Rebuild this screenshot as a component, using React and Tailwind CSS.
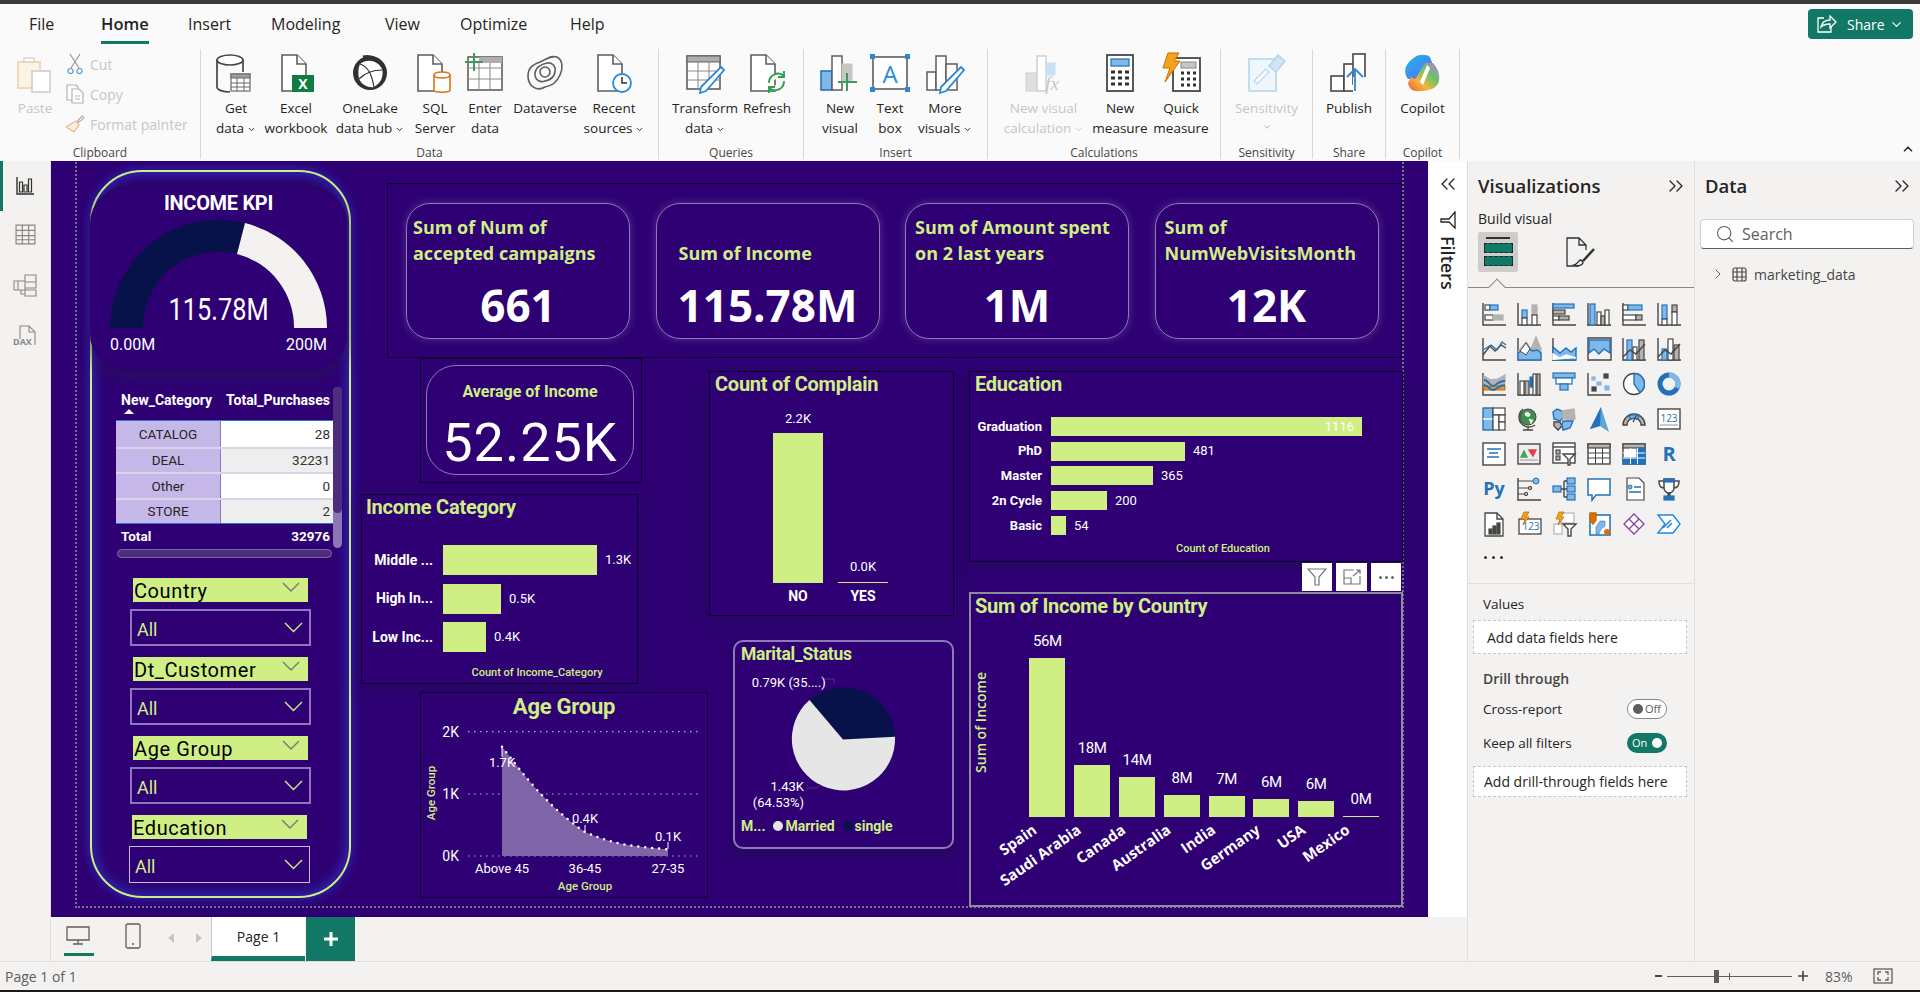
import { ChevronDown, ChevronRight, ChevronUp, ChevronsLeft, ChevronsRight, Search } from "lucide-react";

const LIME = "#cfef85";
const D = "#484644";
const B = "#2372b9";
const L = "#80b8ea";
const G = "#b5b3b1";
const NAVY = "#07124a";

const r = (x, y, w, h, fill = "#fff", stroke = D, sw = 1.2) => (
  <rect x={x} y={y} width={w} height={h} fill={fill} stroke={stroke} strokeWidth={sw} />
);
const p = (d, stroke = D, fill = "none", sw = 1.4) => (
  <path d={d} stroke={stroke} fill={fill} strokeWidth={sw} />
);
const ax = p("M1 1v22h23");

// 24x24 gallery, row by row like the pane
const VIZ = [
  <>{ax}{r(3, 3, 5, 5)}{r(8, 3, 8, 5, L, B)}{r(3, 13, 8, 5)}{r(11, 13, 10, 5, G, G)}</>,
  <>{ax}{r(5, 8, 5, 8, L, B)}{r(5, 16, 5, 7)}{r(15, 3, 5, 10, G, G)}{r(15, 13, 5, 10)}</>,
  <>{ax}{r(1, 2, 21, 4, L, B)}{r(1, 8, 12, 4, G, D)}{r(1, 14, 6, 4)}{r(7, 14, 10, 4, G, D)}</>,
  <>{p("M1 1v22M0 23h24")}{r(3, 2, 5, 21, L, B)}{r(10, 10, 4, 13)}{r(14, 14, 4, 9, G, D)}{r(18, 8, 4, 15)}</>,
  <>{ax}{r(1, 3, 5, 5)}{r(6, 3, 14, 5, L, B)}{r(1, 13, 13, 5)}{r(14, 13, 6, 5, G, D)}</>,
  <>{ax}{r(5, 3, 5, 14, L, B)}{r(5, 17, 5, 6)}{r(15, 3, 5, 7, G, D)}{r(15, 10, 5, 13)}</>,
  <>{ax}{p("M1 18l7-9 5 5 6-6 5 3", D)}{p("M1 13l8-5 6 5 5-8 4 3", B)}</>,
  <>{ax}{p("M1 23v-8l8-10 5 7 5-12 5 12v11z", G, G)}{p("M1 23v-7l9-5 6 3 4-1 4 3v7z", B, L)}{p("M3 14l6-8 4 6-4 6z", D, "#fff", 1)}</>,
  <>{ax}{p("M1 10l7 6 6-5 5 4 5-4v12H1z", B, L)}{p("M1 23v-6l7 4 6-3 10 3", "#fff", "#fff")}</>,
  <>{p("M1 1h23v22H1z")}{p("M2 3h21v13l-6-4-5 5-5-5-5 4z", B, L)}</>,
  <>{ax}{r(5, 3, 5, 20, L, B)}{r(11, 10, 4, 13)}{r(17, 3, 5, 20, G, D)}{p("M1 20l7-7 6 4 9-10", D)}</>,
  <>{ax}{r(5, 12, 5, 11, L, B)}{r(11, 2, 5, 21)}{r(17, 8, 5, 15, G, D)}{p("M1 20l7-7 6 4 9-10", D)}</>,
  <>{ax}{p("M2 4l7 4 7-1 7-4v8l-7 3-7-1-7-2z", G, G)}{r(2, 14, 21, 4, "#e8912d", "#c96a00", 1)}{p("M2 8c5 0 5 6 9 6s5-6 12-5", B, "none", 2)}{p("M2 13c5 0 5 5 9 5s5-5 12-5", B, "none", 2)}</>,
  <>{ax}{r(3, 9, 4, 14)}{r(8, 9, 4, 14, G, D)}{r(13, 5, 3, 10, B, B)}{r(16, 2, 3, 21)}{r(20, 2, 3, 21, G, D)}</>,
  <>{r(1, 1, 22, 5, L, B)}{r(4, 6, 16, 6, "#fff", B)}{r(8, 12, 8, 6, L, B)}</>,
  <>{ax}{r(5, 5, 3, 3, L, L)}{r(10, 10, 4, 3, L, L)}{r(17, 2, 4, 4, D, D)}{r(5, 15, 4, 4, D, D)}{r(18, 14, 4, 4, L, L)}</>,
  <><circle cx="12" cy="12" r="10.5" fill="#fff" stroke={D} strokeWidth="1.3" />{p("M12 1.5a10.5 10.5 0 0 1 6 19L12 12z", B, L)}</>,
  <><circle cx="12" cy="12" r="9" fill="none" stroke={B} strokeWidth="5" /><path d="M12 3a9 9 0 0 1 8 13" fill="none" stroke={L} strokeWidth="5" /></>,
  <>{r(1, 1, 10, 22, L, B, 1.4)}{p("M1 12h10", "#fff")}{r(11, 1, 12, 7, "#fff", D)}{r(11, 8, 6, 15, "#fff", D)}{r(17, 8, 6, 7, "#fff", D)}{r(17, 15, 6, 8, "#fff", D)}</>,
  <><circle cx="11" cy="10" r="8" fill="#3f8f4f" stroke={D} />{p("M8 6c3-2 5 0 5 2s-3 2-5 0zM12 12l4 1-2 4z", "#fff", "#fff", 0.5)}{p("M6 2a10 10 0 0 0 12 16M11 20v3M6 23h10", D)}</>,
  <>{p("M1 5l4-3 5 2 1 7-3 3-6-2z", B, L)}{p("M10 4l12-2 1 10-7 1-5-2z", G, G)}{p("M2 15l6 0 2 4-4 4-4-4z", D, G)}{p("M11 14h10l-3 7-7 2-1-5z", B, L)}</>,
  <>{p("M14 0L22 25 13 19 3 22z", "#5aa9d6", "#5aa9d6", 0)}{p("M14 0l-1 19-10 3z", B, B, 0)}</>,
  <>{p("M1 18a11 11 0 0 1 22 0h-4a7 7 0 0 0-14 0z", D, G)}{p("M7 9a11 11 0 0 1 10 0l-2 3a7 7 0 0 0-6 0z", B, L)}{p("M14 9l-3 6", D)}</>,
  <>{r(1, 2, 22, 20, "#fff", D, 1.4)}<text x="12" y="15" fontSize="10" textAnchor="middle" fill={B}>123</text>{p("M3 18h18", G)}</>,
  <>{r(1, 1, 22, 22, "#fff", D, 1.4)}{p("M5 7h14M7 11h9M5 15h12", B, "none", 1.6)}</>,
  <>{r(1, 2, 22, 20, "#eee", D, 1.4)}{p("M4 15l3-6 3 6z", "#45a35b", "#45a35b")}{p("M12 8h7l-3 6z", "#e2434b", "#e2434b")}{p("M3 18h18", G)}</>,
  <>{r(1, 1, 22, 20, "#fff", D, 1.4)}{p("M1 5h22")}{r(4, 8, 4, 4, G, D)}{r(4, 14, 4, 4, G, D)}{p("M11 12h12l-5 5v6h-2v-6z", D, "#fff")}</>,
  <>{r(1, 2, 22, 20, "#fff", D, 1.4)}{r(1, 2, 22, 4, G, D)}{p("M8.5 6v16M15.5 6v16M1 11h22M1 16h22", D, "none", 1)}</>,
  <>{r(1, 2, 22, 20, "#fff", D, 1.4)}{r(1, 2, 22, 4, G, D)}{r(15, 6, 8, 16, B, B)}{r(1, 16, 22, 6, B, B)}{p("M8.5 6v16M15.5 6v16M1 11h22M1 16h22", "#fff", "none", 1)}</>,
  <text x="12" y="19" fontSize="20" fontWeight="700" textAnchor="middle" fill={B}>R</text>,
  <text x="12" y="18" fontSize="18" fontWeight="700" textAnchor="middle" fill={B}>Py</text>,
  <>{ax}{p("M1 4h16M1 11h11M1 17h7", D, "none", 1)}<circle cx="19" cy="4" r="3" fill={L} stroke={B} /><circle cx="13" cy="11" r="1.7" fill={G} stroke={D} /><circle cx="9" cy="17" r="1.7" fill={G} stroke={D} /></>,
  <>{r(1, 9, 8, 6, L, B)}{r(15, 1, 8, 6, L, B)}{r(15, 9, 8, 6, L, B)}{r(15, 17, 8, 6, L, B)}{p("M9 12h6M12 4v16M12 4h3M12 20h3", D)}</>,
  <>{p("M1 2h22v16H9l-4 5v-5H1z", B, "#fff", 1.5)}</>,
  <>{p("M5 1h12l5 5v17H5z", D, "#fff", 1.2)}<circle cx="8" cy="10" r="2" fill={L} stroke={B} />{p("M12 10h7M7 15h12", B)}</>,
  <>{p("M7 2h10v9a5 5 0 0 1-10 0zM7 4H2c0 5 2 7 5 7M17 4h5c0 5-2 7-5 7", D, "#fff", 1.5)}{r(7, 2, 10, 3, B, B)}{r(11, 16, 2, 3, D, D)}{r(7, 19, 10, 4, B, B)}</>,
  <>{p("M3 1h12l6 6v17H3z", D, "#fff", 1.3)}{p("M15 1v6h6")}{r(7, 17, 3, 5, D, D)}{r(11, 14, 3, 8, D, D)}{r(15, 11, 3, 11, D, D)}</>,
  <>{r(2, 7, 22, 15, "#fff", D, 1.3)}<text x="14" y="18" fontSize="10" textAnchor="middle" fill={B}>123</text>{p("M7 0h5l-3 5h3l-6 8 2-6H4z", "#c96a00", "#f2a51c", 0.8)}</>,
  <>{r(9, 1, 13, 10, "#fff", G)}{r(2, 12, 8, 10, "#fff", G)}{p("M7 0h5l-3 5h3l-6 8 2-6H4z", "#c96a00", "#f2a51c", 0.8)}{p("M11 12h13l-5 5v7h-3v-7z", D, "#fff")}</>,
  <>{p("M3 3h20v20H3z", "#1a6eb0", "#fff", 1.5)}{p("M9 15l4-6h5v5l-4 3-2 5H9z", "#1a6eb0", L, 0.5)}{p("M3 1h6v7l-3 4-3-4z", "#c96a00", "#dd6b10")}<circle cx="20" cy="20" r="3" fill="#dd6b10" /></>,
  <>{p("M12 2l5 5-5 5-5-5zM17 7l5 5-5 5-5-5zM7 7l5 5-5 5-5-5zM12 12l5 5-5 5-5-5z", "#8a3ea6", "#fff", 1.3)}</>,
  <>{p("M1 3h15l7 9-7 9H1l7-9z", "#1e88e5", "#fff", 1.4)}{p("M6 16l8-8", "#1e88e5", "none", 1.6)}{p("M10 16l5-5", "#1e88e5", "none", 1.6)}</>,
];

function VizIcon({ children }) {
  return (
    <svg width="24" height="24" viewBox="0 0 24 24" className="overflow-visible">
      {children}
    </svg>
  );
}

// ribbon icons, all on a 40 box
const doc = <>{p("M6 2h15l9 9v27H6z", "#605e5c", "#fff", 1.6)}{p("M21 2v9h9", "#605e5c", "#fff", 1.6)}</>;
const RIBBON = {
  paste: <>{p("M3 9h22v26H3z", "#f0d9b5", "#fbf3e4", 2)}{p("M9 9V5h10v4z", "#d8d5d2", "#fff", 1.5)}{r(17, 18, 18, 21, "#fff", "#cfcdcb", 1.6)}</>,
  getdata: <><ellipse cx="14" cy="7" rx="13" ry="5" fill="#fff" stroke="#484644" strokeWidth="1.7" />{p("M1 7v27c0 3 6 5 13 5", D, "none", 1.7)}{p("M27 7v12", D, "none", 1.7)}{r(15, 21, 19, 17, "#fff", "#6b6967", 1.2)}{r(15, 21, 19, 4, "#a19f9d", "#6b6967", 1)}{p("M21 25v13M28 25v13M15 30h19M15 34h19", "#6b6967", "none", 1)}</>,
  excel: <>{doc}{r(16, 22, 22, 17, "#107c41", "#107c41", 0)}<text x="27" y="36" fontSize="14" fontWeight="700" textAnchor="middle" fill="#fff">X</text></>,
  onelake: <><circle cx="20" cy="20" r="17" fill="#323130" /><path d="M10 11c8-6 18-3 22 5 2 7-1 14-8 18-6 1-12-2-15-8-1-5-1-11 1-15z" fill="#fff" /><path d="M10 11c9 3 12 12 14 23M32 17c-8 0-17 3-23 9" fill="none" stroke="#323130" strokeWidth="1.2" /><path d="M13 4c8-2 16 2 19 9" fill="none" stroke="#323130" strokeWidth="3" /></>,
  sql: <>{p("M3 2h15l9 9v27H3z", "#605e5c", "#fff", 1.6)}{p("M18 2v9h9", "#605e5c", "#fff", 1.6)}<path d="M19 22c0-4 16-4 16 0v15c0 3-16 3-16 0z" fill="#fff" stroke="#d9731a" strokeWidth="1.6" /><path d="M19 22c0 4 16 4 16 0" fill="none" stroke="#d9731a" strokeWidth="1.6" /></>,
  enter: <>{r(3, 4, 34, 33, "#fff", "#605e5c", 1.6)}{r(14, 4, 23, 6, "#b0aeac", "#b0aeac", 0)}{p("M14 10v27M25 10v27M3 15h34M3 26h34", "#8a8886", "none", 1)}{p("M9 0v18M0 9h18", "#3f9a5a", "none", 2)}</>,
  dataverse: <>{p("M20 34c-8 5-17-1-17-11 0-9 6-12 12-14C22 6 26 2 32 4c6 3 6 12 3 18-3 7-9 11-15 12z", "#605e5c", "none", 1.6)}{p("M20 28c-5 2-10-1-10-7s6-10 12-11 9 4 8 9c-1 6-5 8-10 9z", "#605e5c", "none", 1.6)}<circle cx="20" cy="19" r="5" fill="none" stroke="#605e5c" strokeWidth="1.6" /></>,
  recent: <>{p("M4 2h15l9 9v27H4z", "#605e5c", "#fff", 1.6)}{p("M19 2v9h9", "#605e5c", "#fff", 1.6)}<circle cx="28" cy="30" r="9" fill="#fff" stroke="#2b88d8" strokeWidth="1.8" />{p("M28 24v6h5", "#323130", "none", 1.5)}</>,
  transform: <>{r(2, 3, 33, 33, "#fff", "#605e5c", 1.6)}{r(2, 3, 33, 6, "#b0aeac", "#605e5c", 1)}{p("M13 9v27M24 9v27M2 18h33M2 27h33", "#8a8886", "none", 1)}{p("M36 14l3 3-18 21-6 2 1-6z", "#2b88d8", "#fff", 1.8)}</>,
  refresh: <>{p("M4 2h15l9 9v27H4z", "#605e5c", "#fff", 1.6)}{p("M19 2v9h9", "#605e5c", "#fff", 1.6)}<path d="M22 29a9 9 0 0 1 15-6M37 29a9 9 0 0 1-15 6" fill="#fafafa" stroke="#2e9e4f" strokeWidth="2" strokeLinecap="round" />{p("M37 18v6h-6M22 40v-6h6", "#2e9e4f", "none", 1.8)}</>,
  newvisual: <>{r(1, 18, 11, 19, L, "#1a6eb0", 1.5)}{r(12, 3, 10, 34, "#fff", "#605e5c", 1.5)}{r(22, 11, 10, 18, "#c8c6c4", "#c8c6c4", 1)}{p("M27 20v18M18 29h19", "#3f9a5a", "none", 2)}</>,
  textbox: <>{r(3, 4, 34, 32, "#fff", "#605e5c", 1.6)}<text x="20" y="30" fontSize="24" textAnchor="middle" fill="#2b88d8">A</text>{r(0, 1, 5, 5, "#2b88d8", "#2b88d8", 0)}{r(35, 1, 5, 5, "#2b88d8", "#2b88d8", 0)}{r(0, 34, 5, 5, "#2b88d8", "#2b88d8", 0)}{r(35, 34, 5, 5, "#2b88d8", "#2b88d8", 0)}</>,
  morevisuals: <>{r(2, 19, 9, 18, "#fff", "#605e5c", 1.5)}{r(11, 3, 10, 34, "#fff", "#605e5c", 1.5)}{r(21, 11, 11, 26, "#fff", "#605e5c", 1.5)}{p("M36 14l3 3-18 21-6 2 1-6z", "#2b88d8", "#fff", 1.8)}</>,
  fx: <>{r(2, 20, 11, 18, "#e1dfdd", "#d2d0ce", 1)}{r(13, 3, 9, 35, "#fff", "#d2d0ce", 1.5)}{r(22, 10, 9, 12, "#c7e0f4", "#c7e0f4", 1)}<text x="28" y="37" fontSize="19" fontStyle="italic" fontFamily="Liberation Serif" textAnchor="middle" fill="#c8c6c4">fx</text></>,
  calc: <>{r(7, 2, 26, 36, "#fff", "#484644", 1.8)}{r(11, 6, 18, 7, L, "#1a6eb0", 1.2)}{p("M11 19h4M18 19h4M25 19h4M11 25h4M18 25h4M25 25h4M11 31h4M18 31h4M25 31h4", "#323130", "none", 3)}</>,
  quick: <>{r(12, 5, 27, 33, "#fff", "#484644", 1.8)}{r(20, 9, 15, 6, "#c8c6c4", "#8a8886", 1)}{p("M20 20h3M26 20h3M32 20h3M20 26h3M26 26h3M32 26h3M20 32h3M26 32h3M32 32h3", "#323130", "none", 3)}{p("M7 0h11l-5 8h6L4 29l5-14H2z", "#c96a00", "#f2a51c", 1)}</>,
  sens: <>{r(2, 6, 27, 32, "#eff6fc", "#b3d6ee", 1.6)}{p("M7 28l12-12 3 3-12 12z", "#b3d6ee", "#fff", 1.2)}{p("M22 13l9-11 7 6-9 11z", "#b3d6ee", "#cfe4f4", 1.5)}</>,
  publish: <>{r(2, 23, 13, 15, "#fff", D, 1.6)}{r(15, 11, 13, 27, "#fff", D, 1.6)}{r(24, 1, 12, 30, "#fff", D, 1.6)}{r(24, 24, 14, 15, "#fafafa", "#fafafa", 0)}{p("M26 38V16M18 24l8-8 8 8", "#2b88d8", "none", 1.8)}</>,
  copilot: <>
    <defs>
      <linearGradient id="cpa" x1="0" y1="0" x2="1" y2="1"><stop offset="0" stopColor="#1fb6e9" /><stop offset=".55" stopColor="#3f8df0" /><stop offset="1" stopColor="#8a5cf0" /></linearGradient>
      <linearGradient id="cpb" x1="0" y1="1" x2="1" y2="0"><stop offset="0" stopColor="#f05a3a" /><stop offset=".35" stopColor="#f4b83a" /><stop offset=".65" stopColor="#66c36a" /><stop offset="1" stopColor="#d070e0" /></linearGradient>
    </defs>
    <path d="M12 4c4-3 12-3 15 0l5 14-12-4-7 12H5C1 20 0 12 12 4z" fill="url(#cpa)" />
    <path d="M13 38c-4 0-7-3-8-8l3-6c4 3 5 2 7-2l7-12h8c5 5 9 16 4 22-3 4-8 6-21 6z" fill="url(#cpb)" />
    <path d="M24 12l3 3-7 17-3-3z" fill="#fff" />
  </>,
};

function RibbonIcon({ name, size = "w-[40px] h-[40px]" }) {
  return (
    <svg viewBox="0 0 40 40" className={`${size} overflow-visible`}>
      {RIBBON[name]}
    </svg>
  );
}

function Big({ icon, lines, w, caret, off }) {
  return (
    <div className={`flex flex-col items-center shrink-0 ${w} ${off ? "text-[#c8c6c4]" : "text-[#252423]"}`}>
      <div className="h-[44px] flex items-end">
        <RibbonIcon name={icon} />
      </div>
      <div className="mt-[5px] text-[13.5px] leading-[20px] text-center whitespace-nowrap">
        {lines.map((l, i) => (
          <div key={l} className="flex items-center justify-center">
            {l}
            {caret && i === lines.length - 1 && <ChevronDown size={9} strokeWidth={2.5} className="ml-[3px] mt-[2px]" />}
          </div>
        ))}
      </div>
    </div>
  );
}

function Group({ w, label, pad = "", children }) {
  return (
    <div className={`${w} shrink-0 h-[110px] flex flex-col border-r border-[#d9d7d5]`}>
      <div className={`flex-1 flex ${pad}`}>{children}</div>
      <div className="relative top-[2px] text-center text-[12px] leading-[16px] text-[#484644]">{label}</div>
    </div>
  );
}

function SmallAction({ icon, text }) {
  return (
    <div className="flex items-center h-[30px] text-[#c8c6c4] text-[14px]">
      <span className="w-[20px] flex justify-center">{icon}</span>
      <span className="ml-[5px]">{text}</span>
    </div>
  );
}

function Ribbon() {
  return (
    <div className="h-[112px] flex shrink-0 items-start bg-[#fafafa] relative">
      <Group w="w-[201px]" label="Clipboard" pad="pl-[15px]">
        <Big icon="paste" lines={["Paste"]} w="w-[40px]" off />
        <div className="ml-[10px] flex flex-col">
          <SmallAction text="Cut" icon={<svg width="16" height="22" viewBox="0 0 16 22" fill="none" stroke="#9a9896" strokeWidth="1.2"><path d="M3 1l9 14M13 1L4 15" /><circle cx="3.5" cy="18" r="2.5" stroke="#5b9bd5" /><circle cx="12.5" cy="18" r="2.5" stroke="#5b9bd5" /></svg>} />
          <SmallAction text="Copy" icon={<svg width="18" height="20" viewBox="0 0 18 20" fill="#fff" stroke="#b5b3b1" strokeWidth="1.2"><path d="M1 1h9l2 2v13H1z" /><path d="M6 5h7l4 4v10H6z" /><path d="M9 12h5M9 15h5" /></svg>} />
          <SmallAction text="Format painter" icon={<svg width="20" height="20" viewBox="0 0 20 20" fill="none" strokeWidth="1.2"><path d="M12 8l5-6 2 2-6 5z" stroke="#b5b3b1" /><path d="M11 7l3 4-5 7-8-5z" stroke="#e8b88f" fill="#fbeede" /></svg>} />
        </div>
      </Group>
      <Group w="w-[458px]" label="Data" pad="pl-[5px]">
        <Big icon="getdata" lines={["Get", "data"]} caret w="w-[60px]" />
        <Big icon="excel" lines={["Excel", "workbook"]} w="w-[60px]" />
        <Big icon="onelake" lines={["OneLake", "data hub"]} caret w="w-[88px]" />
        <Big icon="sql" lines={["SQL", "Server"]} w="w-[42px]" />
        <Big icon="enter" lines={["Enter", "data"]} w="w-[58px]" />
        <Big icon="dataverse" lines={["Dataverse"]} w="w-[62px]" />
        <Big icon="recent" lines={["Recent", "sources"]} caret w="w-[76px]" />
      </Group>
      <Group w="w-[145px]" label="Queries" pad="pl-[8px]">
        <Big icon="transform" lines={["Transform", "data"]} caret w="w-[76px]" />
        <Big icon="refresh" lines={["Refresh"]} w="w-[48px]" />
      </Group>
      <Group w="w-[184px]" label="Insert" pad="pl-[8px]">
        <Big icon="newvisual" lines={["New", "visual"]} w="w-[56px]" />
        <Big icon="textbox" lines={["Text", "box"]} w="w-[44px]" />
        <Big icon="morevisuals" lines={["More", "visuals"]} caret w="w-[66px]" />
      </Group>
      <Group w="w-[233px]" label="Calculations" pad="pl-[8px]">
        <Big icon="fx" lines={["New visual", "calculation"]} caret off w="w-[95px]" />
        <Big icon="calc" lines={["New", "measure"]} w="w-[58px]" />
        <Big icon="quick" lines={["Quick", "measure"]} w="w-[64px]" />
      </Group>
      <Group w="w-[92px]" label="Sensitivity">
        <div className="w-full flex flex-col items-center text-[#c8c6c4]">
          <div className="h-[44px] flex items-end"><RibbonIcon name="sens" /></div>
          <div className="mt-[5px] text-[13.5px] leading-[20px]">Sensitivity</div>
          <ChevronDown size={10} strokeWidth={2} className="mt-[4px] text-[#a19f9d]" />
        </div>
      </Group>
      <Group w="w-[73px]" label="Share">
        <div className="w-full flex justify-center"><Big icon="publish" lines={["Publish"]} w="w-[60px]" /></div>
      </Group>
      <Group w="w-[74px]" label="Copilot">
        <div className="w-full flex justify-center"><Big icon="copilot" lines={["Copilot"]} w="w-[60px]" /></div>
      </Group>
      <ChevronUp size={14} strokeWidth={3} className="absolute right-[5px] top-[93px] text-[#323130]" />
    </div>
  );
}

function Tabs() {
  const tabs = [
    ["File", "w-[72px]"],
    ["Home", "w-[87px]"],
    ["Insert", "w-[83px]"],
    ["Modeling", "w-[114px]"],
    ["View", "w-[75px]"],
    ["Optimize", "w-[110px]"],
    ["Help", "w-[50px]"],
  ];
  return (
    <div className="h-[45px] shrink-0 flex bg-[#fafafa] pl-[29px] pt-[8px] relative">
      {tabs.map(([t, w]) => (
        <div key={t} className={`${w} text-[16px] leading-[24px] text-[#252423]`}>
          <span className={`inline-block ${t === "Home" ? "font-semibold text-[16.500px] border-b-[3px] border-[#117865] pb-[5px]" : ""}`}>{t}</span>
        </div>
      ))}
      <div className="absolute left-[1808px] top-[5px] w-[105px] h-[30px] rounded-[4px] bg-[#117865] flex items-center pl-[9px] text-white text-[14px]">
        <svg width="20" height="18" viewBox="0 0 20 18" fill="none" stroke="#fff" strokeWidth="1.3"><path d="M7 3H1v14h13v-6" /><path d="M4 12c1-5 5-7 9-7V1l6 6-6 6V9c-4 0-7 1-9 3z" /></svg>
        <span className="ml-[10px]">Share</span>
        <ChevronDown size={15} strokeWidth={1.8} className="ml-[4px]" />
      </div>
    </div>
  );
}

function RailIcons() {
  return (
    <div className="w-[51px] shrink-0 border-r border-[#e1dfdd] bg-[#f3f2f1] relative flex flex-col items-center pt-[16px]">
      <div className="absolute left-0 top-0 w-[3px] h-[50px] bg-[#117865]" />
      <svg width="18" height="18" viewBox="0 0 18 18" fill="none" stroke="#323130" strokeWidth="1.2"><path d="M1 0v17h17" strokeWidth="1.4" /><path d="M3.500 5h3v10h-3zM8 8h3v7H8zM12.500 2h3v13h-3z" /></svg>
      <svg className="mt-[29px]" width="21" height="21" viewBox="0 0 20 20" fill="none" stroke="#8a8886" strokeWidth="1.1"><path d="M1 1h18v18H1zM1 6h18M1 11h18M1 15h18M7 1v18M13 1v18" /></svg>
      <svg className="mt-[29px]" width="24" height="24" viewBox="0 0 24 24" fill="none" stroke="#8a8886" strokeWidth="1.1"><path d="M12 1h11v7H12zM12 8h11v6H12zM1 7h11v9H1zM12 16h11v6H12zM5 7v9M12 20H8v-4" /></svg>
      <div className="mt-[27px] relative w-[24px] h-[24px]">
        <svg width="20" height="22" viewBox="0 0 20 22" className="absolute left-[6px] top-0" fill="none" stroke="#8a8886" strokeWidth="1.1"><path d="M1 14V1h9l6 6v13" /><path d="M10 1v6h6" /></svg>
        <span className="absolute left-0 top-[12px] text-[9px] font-bold leading-[10px] text-[#8a8886]">DAX</span>
      </div>
    </div>
  );
}

function Slicer({ title, tail = false }) {
  return (
    <div className={tail ? "-ml-[1px] w-[181px]" : "w-[181px]"}>
      <div className="ml-[3px] w-[175px] h-[24px] bg-[#cfef85] flex items-center justify-between pr-[8px] pl-[1px] pt-[2px] text-black text-[20px] tracking-[0.6px] leading-[24px] font-['Roboto',sans-serif]">
        <span>{title}</span>
        <svg width="18" height="10" viewBox="0 0 18 10" fill="none" stroke="#777" strokeWidth="1.4" className="-mt-[8px]"><path d="M1 1l8 8 8-8" /></svg>
      </div>
      <div className={`mt-[7px] h-[37px] flex items-center justify-between pl-[5px] pr-[6px] pt-[3px] text-[#cfef85] text-[18px] font-['Roboto',sans-serif] ${tail ? "border border-[#c8bde0]" : "border-2 border-[#8f77c0]"}`}>
        <span>All</span>
        <svg width="19" height="11" viewBox="0 0 19 11" fill="none" stroke="#cfef85" strokeWidth="1.4" className="-mt-[3px]"><path d="M1 1l8.500 8.500L18 1" /></svg>
      </div>
    </div>
  );
}

function KpiPanel() {
  const rows = [
    ["CATALOG", "28", "bg-white"],
    ["DEAL", "32231", "bg-[#eeeeee]"],
    ["Other", "0", "bg-white"],
    ["STORE", "2", "bg-[#eeeeee]"],
  ];
  return (
    <div className="absolute left-[39px] top-[9px] w-[261px] h-[728px] rounded-[52px] border-2 border-[#cfef85] shadow-[0_0_10px_2px_rgba(45,60,210,0.55),inset_0_0_12px_3px_rgba(45,70,220,0.6)] bg-[#2e0073] pt-[14px]">
      <div className="-ml-[2px] w-[257px] h-[186px] rounded-[38px] border-t border-b border-[#1e1148] bg-[#2e0073] shadow-[0_6px_14px_rgba(40,20,90,0.7)] flex flex-col items-center pt-[4px]">
        <div className="text-white text-[20px] tracking-[-0.3px] leading-[24px] font-bold font-['Roboto',sans-serif]">INCOME KPI</div>
        <svg width="217" height="140" viewBox="0 0 217 140" className="mt-[5px] overflow-visible font-['Roboto',sans-serif]">
          <path d="M0 108A108.500 108.500 0 0 1 135 3L127 34A75.500 75.500 0 0 0 33 108Z" fill={NAVY} />
          <path d="M135 3A108.500 108.500 0 0 1 217 108L184 108A75.500 75.500 0 0 0 127 34Z" fill="#f3f2f1" />
          <text x="108.500" y="100" fontSize="32" textAnchor="middle" fill="#fff" textLength="100" lengthAdjust="spacingAndGlyphs">115.78M</text>
          <text x="0" y="130" fontSize="16" fill="#fff">0.00M</text>
          <text x="217" y="130" fontSize="16" textAnchor="end" fill="#fff">200M</text>
        </svg>
      </div>
      <div className="relative ml-[24px] mt-[15px] w-[226px] h-[171px]">
        <div className="h-[33px] w-[217px] flex justify-between text-white text-[14px] font-bold pl-[5px] pr-[3px] pt-[5px] leading-[16px]">
          <span>New_Category</span>
          <span>Total_Purchases</span>
        </div>
        <div className="absolute left-[8px] top-[22px] w-0 h-0 border-x-[5px] border-x-transparent border-b-[5px] border-b-white" />
        <div className="w-[217px] border-y border-[#2f78c9]">
          {rows.map(([a, b, bg], i) => (
            <div key={a} className={`h-[25.500px] grid grid-cols-[105px_112px] text-[13.5px] ${i ? "border-t-2 border-[#d9d5e6]" : ""}`}>
              <div className="bg-[#c5b8e8] text-[#252423] flex items-center justify-center border-r border-[#8f77c0]">{a}</div>
              <div className={`${bg} text-[#333] flex items-center justify-end pr-[3px]`}>{b}</div>
            </div>
          ))}
        </div>
        <div className="w-[217px] h-[25px] flex justify-between items-center text-white text-[13.5px] font-bold px-[5px]">
          <span>Total</span>
          <span className="-mr-[2px]">32976</span>
        </div>
        <div className="w-[215px] ml-[1px] h-[9px] rounded-full bg-[#4c2e7a] border border-[#7d66a8]" />
        <div className="absolute left-[217px] top-0 w-[9px] h-[161px] rounded-full bg-[#8c76b8]">
          <div className="h-[126px] rounded-full bg-[#4c2e7a]" />
        </div>
      </div>
      <div className="ml-[38px] mt-[20px] flex flex-col gap-[11px]">
        <Slicer title="Country" />
        <Slicer title="Dt_Customer" />
        <Slicer title="Age Group" />
        <Slicer title="Education" tail />
      </div>
    </div>
  );
}

function Card({ title, value, pad }) {
  return (
    <div className="w-[224px] h-[136px] shrink-0 rounded-[24px] border border-[#8d7cb5] shadow-[0_0_8px_rgba(160,140,210,0.35)] pt-[10px]">
      <div className={`h-[52px] flex flex-col justify-end text-[#cfef85] text-[18px] font-bold leading-[26px] whitespace-pre ${pad}`}>{title}</div>
      <div className="mt-[14px] text-center text-white text-[44px] font-bold leading-[50px]">{value}</div>
    </div>
  );
}

const EDU = [
  { k: "Graduation", v: 1116, w: 311 },
  { k: "PhD", v: 481, w: 134 },
  { k: "Master", v: 365, w: 102 },
  { k: "2n Cycle", v: 200, w: 56 },
  { k: "Basic", v: 54, w: 15 },
];
const INC = [
  { k: "Middle ...", v: "1.3K", w: 154 },
  { k: "High In...", v: "0.5K", w: 58 },
  { k: "Low Inc...", v: "0.4K", w: 43 },
];
const COUNTRY = [
  { k: "Spain", v: "56M", h: 159 },
  { k: "Saudi Arabia", v: "18M", h: 52 },
  { k: "Canada", v: "14M", h: 40 },
  { k: "Australia", v: "8M", h: 22 },
  { k: "India", v: "7M", h: 21 },
  { k: "Germany", v: "6M", h: 18 },
  { k: "USA", v: "6M", h: 16 },
  { k: "Mexico", v: "0M", h: 1 },
];

function VisualTitle({ children, className = "" }) {
  return <div className={`h-[24px] text-[#cfef85] text-[20px] font-bold leading-[24px] tracking-[-0.25px] font-['Roboto',sans-serif] ${className}`}>{children}</div>;
}

function Canvas() {
  return (
    <div className="relative w-[1377px] h-[756px] bg-[#2e0073] overflow-hidden shrink-0 font-['Roboto',sans-serif]">
      <div className="absolute left-[24px] -top-[2px] w-[1329px] h-[749px] border-2 border-dotted border-[#7a7292]" />
      <KpiPanel />

      <div className="absolute left-[336px] top-[22px] w-[1015px] h-[175px] border border-[#0b0230] flex gap-[25.500px] pl-[18px] pt-[19px] font-['Open_Sans',sans-serif]">
        <Card title={"Sum of Num of\naccepted campaigns"} value="661" pad="pl-[6px]" />
        <Card title="Sum of Income" value="115.78M" pad="pl-[22px]" />
        <Card title={"Sum of Amount spent\non 2 last years"} value="1M" pad="pl-[9px]" />
        <Card title={"Sum of\nNumWebVisitsMonth"} value="12K" pad="pl-[9px]" />
      </div>

      <div className="absolute left-[369px] top-[197px] w-[222px] h-[125px] border border-[#0b0230] pl-[5px] pt-[6px]">
        <div className="w-[208px] h-[110px] rounded-[30px] border border-[#8d7cb5] flex flex-col items-center pt-[14px]">
          <div className="text-[#cfef85] text-[16px] font-bold leading-[24px]">Average of Income</div>
          <div className="text-white text-[54px] leading-[60px] mt-[9px] tracking-[1px]">52.25K</div>
        </div>
      </div>

      <div className="absolute left-[658px] top-[210px] w-[245px] h-[245px] border border-[#0b0230] shadow-[0_4px_14px_rgba(30,15,80,0.6)] bg-[#2e0073]">
        <VisualTitle className="pl-[5px]">Count of Complain</VisualTitle>
        <div className="ml-[63px] h-[212px] flex items-end gap-[15px] text-white text-[13px]">
          <div className="w-[50px] flex flex-col items-center">
            <div className="mb-[6px] leading-[16px]">2.2K</div>
            <div className="w-full h-[150px] bg-[#cfef85]" />
            <div className="leading-[24px] mt-[1px] font-bold text-[14px]">NO</div>
          </div>
          <div className="w-[50px] flex flex-col items-center">
            <div className="mb-[7px] leading-[16px]">0.0K</div>
            <div className="w-full h-[1px] bg-[#cfef85]" />
            <div className="leading-[24px] mt-[1px] font-bold text-[14px]">YES</div>
          </div>
        </div>
      </div>

      <div className="absolute left-[918px] top-[210px] w-[434px] h-[191px] border border-[#0b0230] shadow-[0_4px_14px_rgba(30,15,80,0.6)] bg-[#2e0073]">
        <VisualTitle className="pl-[5px]">Education</VisualTitle>
        <div className="mt-[21px] flex flex-col gap-[5.700px]">
          {EDU.map((d) => (
            <div key={d.k} className="flex items-center h-[19px] text-[13px]">
              <div className="w-[72px] text-right text-white font-bold">{d.k}</div>
              <div className="ml-[9px] h-full bg-[#cfef85] flex items-center justify-end" style={{ width: d.w }}>
                {d.v > 1000 && <span className="text-white mr-[8px]">{d.v}</span>}
              </div>
              {d.v < 1000 && <span className="text-white ml-[8px]">{d.v}</span>}
            </div>
          ))}
        </div>
        <div className="ml-[81px] mt-[7px] w-[344px] text-center text-[#cfef85] text-[11px] font-medium leading-[14px]">Count of Education</div>
      </div>

      <div className="absolute left-[1251px] top-[402px] flex gap-[4px]">
        <div className="w-[30px] h-[28px] bg-white flex items-center justify-center">
          <svg width="20" height="20" viewBox="0 0 20 20" fill="none" stroke="#777" strokeWidth="1.2"><path d="M1 2h18l-7 8v8H8v-8z" /></svg>
        </div>
        <div className="w-[31px] h-[28px] bg-white flex items-center justify-center">
          <svg width="18" height="16" viewBox="0 0 18 16" fill="none" stroke="#777" strokeWidth="1.2"><path d="M11 1H1v14h16V7M1 9h7v6M10 7l7-6M13 1h4v4" /></svg>
        </div>
        <div className="w-[30px] h-[28px] bg-white flex items-center justify-center gap-[3px]">
          <span className="w-[3px] h-[3px] rounded-full bg-[#666]" />
          <span className="w-[3px] h-[3px] rounded-full bg-[#666]" />
          <span className="w-[3px] h-[3px] rounded-full bg-[#666]" />
        </div>
      </div>

      <div className="absolute left-[310px] top-[333px] w-[277px] h-[190px] border border-[#0b0230] shadow-[0_4px_14px_rgba(30,15,80,0.6)] bg-[#2e0073]">
        <VisualTitle className="pl-[4px]">Income Category</VisualTitle>
        <div className="mt-[26px] flex flex-col gap-[8.500px]">
          {INC.map((d) => (
            <div key={d.k} className="flex items-center h-[30px]">
              <div className="w-[71px] text-right text-white font-bold text-[14px]">{d.k}</div>
              <div className="ml-[10px] h-full bg-[#cfef85]" style={{ width: d.w }} />
              <span className="text-white text-[13px] ml-[8px]">{d.v}</span>
            </div>
          ))}
        </div>
        <div className="ml-[81px] mt-[14px] w-[188px] text-center text-[#cfef85] text-[11px] font-medium leading-[14px]">Count of Income_Category</div>
      </div>

      <div className="absolute left-[369px] top-[531px] w-[288px] h-[206px] border border-[#0b0230] bg-[#2e0073]">
        <div className="h-[28px] text-center text-[#cfef85] text-[22px] font-bold leading-[28px] tracking-[-0.25px]">Age Group</div>
        <svg width="286" height="176" viewBox="0 0 286 176" fontSize="13">
          <path d="M47 10.700H277M47 73H277M47 135H277" stroke="#b9aed6" strokeWidth="1.200" strokeDasharray="1.500 4.500" />
          <text x="38" y="15.700" textAnchor="end" fill="#fff" fontSize="14">2K</text>
          <text x="38" y="78" textAnchor="end" fill="#fff" fontSize="14">1K</text>
          <text x="38" y="140" textAnchor="end" fill="#fff" fontSize="14">0K</text>
          <path d="M81 135V25.700C100 50 125 85 164 111C195 125 220 126 247 128.300V135Z" fill="#8064a8" />
          <path d="M81 25.700C100 50 125 85 164 111C195 125 220 126 247 128.300" fill="none" stroke="#fff" strokeWidth="2.500" strokeLinecap="round" strokeDasharray="0 7" />
          <path d="M81 25.700v10M164 104v7M247 121v7" stroke="#fff" strokeWidth="1" />
          <text x="81" y="45.700" textAnchor="middle" fill="#fff">1.7K</text>
          <text x="164" y="101.700" textAnchor="middle" fill="#fff">0.4K</text>
          <text x="247" y="119.700" textAnchor="middle" fill="#fff">0.1K</text>
          <text x="81" y="151.700" textAnchor="middle" fill="#fff">Above 45</text>
          <text x="164" y="151.700" textAnchor="middle" fill="#fff">36-45</text>
          <text x="247" y="151.700" textAnchor="middle" fill="#fff">27-35</text>
          <text x="164" y="168.700" textAnchor="middle" fill={LIME} fontSize="11.500" fontWeight="500">Age Group</text>
          <text transform="translate(14 72) rotate(-90)" textAnchor="middle" fill={LIME} fontSize="11.500" fontWeight="500">Age Group</text>
        </svg>
      </div>

      <div className="absolute left-[682px] top-[479px] w-[221px] h-[209px] rounded-[10px] border-2 border-[#8e7ab8] shadow-[0_6px_14px_rgba(30,15,80,0.6)] bg-[#2e0073]">
        <div className="h-[24px] pl-[6px] text-[#cfef85] text-[17.500px] font-bold leading-[24px] tracking-[-0.25px]">Marital_Status</div>
        <svg width="217" height="150" viewBox="0 0 217 150" fontSize="13">
          <path d="M108 73.500L74.500 34A51.600 51.600 0 0 1 160 70.700Z" fill={NAVY} />
          <path d="M108 73.500L160 70.700A51.600 51.600 0 1 1 74.500 34Z" fill="#e6e6e6" />
          <path d="M88 13h11v5M72 122h10l3-4" fill="none" stroke="#4a3285" strokeWidth="1" />
          <text x="16.700" y="21" fill="#fff">0.79K (35....)</text>
          <text x="69" y="125" textAnchor="end" fill="#fff">1.43K</text>
          <text x="69" y="141" textAnchor="end" fill="#fff">(64.53%)</text>
        </svg>
        <div className="h-[20px] flex items-center pl-[6px] text-[#cfef85] text-[14px] font-bold">
          <span>M...</span>
          <span className="ml-[8px] w-[10px] h-[10px] rounded-full bg-[#e6e6e6]" />
          <span className="ml-[2px]">Married</span>
          <span className="ml-[8px] w-[10px] h-[10px] rounded-full bg-[#07124a]" />
          <span className="ml-[2px]">single</span>
        </div>
      </div>

      <div className="absolute left-[918px] top-[431px] w-[434px] h-[315px] border-2 border-[#8c8c9a] bg-[#2e0073]">
        <VisualTitle className="pl-[4px]">Sum of Income by Country</VisualTitle>
        <div className="relative ml-[54px] h-[199px] flex items-end">
          {COUNTRY.map((d) => (
            <div key={d.k} className="relative w-[44.800px] shrink-0 flex flex-col items-center text-white">
              <div className="text-[15px] tracking-[-0.4px] leading-[20px] mb-[7px]">{d.v}</div>
              <div className="w-[36px] bg-[#cfef85]" style={{ height: d.h }} />
              <div className="absolute right-[41px] top-full mt-[3px] origin-top-right -rotate-[35deg] whitespace-nowrap text-[15px] font-bold leading-[18px] font-['Open_Sans',sans-serif]">{d.k}</div>
            </div>
          ))}
        </div>
        <div className="absolute left-[-1px] top-[78px] h-[100px] w-[20px] flex items-center justify-center">
          <span className="-rotate-90 whitespace-nowrap text-[#cfef85] text-[14px] font-semibold font-['Open_Sans',sans-serif]">Sum of Income</span>
        </div>
      </div>
    </div>
  );
}

function FiltersPane() {
  return (
    <div className="flex-1 h-[756px] bg-white flex flex-col items-center pt-[11px] text-[#252423]">
      <ChevronsLeft size={24} strokeWidth={1.3} />
      <svg className="mt-[15px]" width="16" height="18" viewBox="0 0 16 18" fill="none" stroke="#252423" strokeWidth="1.3"><path d="M15 1v16L9 11H1v-3h8z" /></svg>
      <div className="mt-[7px] text-[18px] font-semibold [writing-mode:vertical-rl] leading-[20px]">Filters</div>
    </div>
  );
}

function TabBar() {
  return (
    <div className="h-[44px] flex bg-[#f3f2f1]">
      <div className="relative w-[160px] shrink-0">
        <svg className="absolute left-[15px] top-[9px]" width="24" height="19" viewBox="0 0 24 19" fill="none" stroke="#605e5c" strokeWidth="1.3"><path d="M1 1h22v13H1zM12 14v4M7 18h10" /></svg>
        <div className="absolute left-[13px] top-[36px] w-[30px] h-[3px] bg-[#117865]" />
        <svg className="absolute left-[74px] top-[6px]" width="16" height="26" viewBox="0 0 16 26" fill="none" stroke="#605e5c" strokeWidth="1.3"><rect x="1" y="1" width="14" height="24" rx="1.500" /><path d="M7 21h2" /></svg>
        <span className="absolute left-[117px] top-[16px] w-0 h-0 border-y-[5px] border-y-transparent border-r-[6px] border-r-[#c8c6c4]" />
        <span className="absolute left-[145px] top-[16px] w-0 h-0 border-y-[5px] border-y-transparent border-l-[6px] border-l-[#c8c6c4]" />
      </div>
      <div className="w-[94px] bg-white border-l border-[#c8c6c4] border-b-[5px] border-b-[#117865] flex items-center justify-center text-[14px] text-[#252423]">Page 1</div>
      <div className="ml-[1px] w-[49px] bg-[#117865] flex items-center justify-center">
        <svg width="14" height="14" viewBox="0 0 14 14" stroke="#fff" strokeWidth="3"><path d="M7 0v14M0 7h14" /></svg>
      </div>
    </div>
  );
}

function Toggle({ on }) {
  return on ? (
    <div className="w-[40px] h-[20px] rounded-full bg-[#117865] flex items-center justify-between px-[5px] text-white text-[11px]">
      <span>On</span>
      <span className="w-[10px] h-[10px] rounded-full bg-white" />
    </div>
  ) : (
    <div className="w-[40px] h-[20px] rounded-full border border-[#8a8886] bg-white flex items-center justify-between pl-[5px] pr-[5px] text-[#605e5c] text-[11px]">
      <span className="w-[10px] h-[10px] rounded-full bg-[#605e5c]" />
      <span>Off</span>
    </div>
  );
}

function VizPane() {
  return (
    <div className="w-[227px] shrink-0 border-l border-[#e1dfdd] bg-[#f3f2f1] text-[#252423]">
      <div className="flex items-center justify-between h-[50px] pl-[10px] pr-[6px]">
        <span className="text-[18.500px] font-semibold">Visualizations</span>
        <ChevronsRight size={24} strokeWidth={1.3} />
      </div>
      <div className="pl-[10px] h-[16px] -mt-[1px] flex items-center text-[14px] font-medium">Build visual</div>
      <div className="flex items-start pl-[10px] mt-[6px]">
        <div className="w-[40px] h-[40px] bg-[#cfcdcb] rounded-[2px] flex flex-col items-center pt-[5px]">
          <div className="w-[24px] h-[1.500px] bg-[#323130]" />
          <div className="w-[29px] h-[10px] mt-[4px] bg-[#117865] border border-dashed border-[#222]" />
          <div className="w-[29px] h-[10px] mt-[3px] bg-[#117865] border border-dashed border-[#222]" />
        </div>
        <svg className="ml-[48px] mt-[5px]" width="30" height="30" viewBox="0 0 30 30" fill="none" stroke="#323130" strokeWidth="1.300"><path d="M13 29H1V1h12l7 7v5M13 1v7h7" /><path d="M28 12L17 24" strokeWidth="2.500" /><path d="M15 23c-3 0-3 4-7 5 3 1 9 1 9-3z" /></svg>
      </div>
      <div className="relative mt-[15px] h-[1px] bg-[#8a8886]">
        <div className="absolute left-[23px] -top-[6px] w-[12px] h-[12px] rotate-45 border-l border-t border-[#8a8886] bg-[#f3f2f1]" />
      </div>
      <div className="ml-[8px] mt-[8px] grid grid-cols-[repeat(6,35px)] auto-rows-[35px]">
        {VIZ.map((icon, i) => (
          <div key={i} className="flex items-center justify-center">
            <VizIcon>{icon}</VizIcon>
          </div>
        ))}
        <div className="flex items-center justify-center gap-[5px] -mt-[2px]">
          <span className="w-[3px] h-[3px] bg-[#323130] rounded-full" />
          <span className="w-[3px] h-[3px] bg-[#323130] rounded-full" />
          <span className="w-[3px] h-[3px] bg-[#323130] rounded-full" />
        </div>
      </div>
      <div className="mt-[7px] border-t border-[#e1dfdd] pl-[5px] pr-[7px]">
        <div className="pl-[10px] mt-[10px] h-[20px] flex items-center text-[13.500px]">Values</div>
        <div className="mt-[6px] h-[34px] border border-dashed border-[#c8c6c4] bg-white flex items-center pl-[13px] text-[14px]">Add data fields here</div>
        <div className="pl-[10px] mt-[14px] h-[20px] flex items-center text-[14px] font-semibold text-[#484644]">Drill through</div>
        <div className="pl-[10px] mt-[11px] h-[20px] flex items-center justify-between pr-[20px] text-[13.500px]">
          <span>Cross-report</span>
          <Toggle />
        </div>
        <div className="pl-[10px] mt-[14px] h-[20px] flex items-center justify-between pr-[20px] text-[13.500px]">
          <span>Keep all filters</span>
          <Toggle on />
        </div>
        <div className="mt-[13px] h-[31px] border border-dashed border-[#c8c6c4] bg-white flex items-center pl-[10px] text-[14px]">Add drill-through fields here</div>
      </div>
    </div>
  );
}

function DataPane() {
  return (
    <div className="flex-1 border-l border-[#e1dfdd] bg-[#f3f2f1] text-[#252423]">
      <div className="flex items-center justify-between h-[50px] pl-[10px] pr-[6px]">
        <span className="text-[18.500px] font-semibold">Data</span>
        <ChevronsRight size={24} strokeWidth={1.3} />
      </div>
      <div className="ml-[5px] mt-[8px] w-[214px] h-[30px] bg-white rounded-[4px] border border-[#d2d0ce] border-b-[#605e5c] flex items-center pl-[14px] text-[#605e5c] text-[16px]">
        <Search size={20} strokeWidth={1.3} />
        <span className="ml-[7px]">Search</span>
      </div>
      <div className="mt-[15px] ml-[15px] flex items-center h-[20px] text-[14px] text-[#484644]">
        <ChevronRight size={16} strokeWidth={1.3} />
        <svg className="ml-[6px]" width="15" height="15" viewBox="0 0 15 15" fill="none" stroke="#484644" strokeWidth="1.200"><rect x="1" y="1" width="13" height="13" rx="2" /><path d="M5 1v13M10 1v13M1 5h13M1 10h13" /></svg>
        <span className="ml-[7px]">marketing_data</span>
      </div>
    </div>
  );
}

function StatusBar() {
  return (
    <div className="h-[29px] shrink-0 border-t border-[#e1dfdd] bg-[#f3f2f1] flex items-center pl-[5px] text-[14px] text-[#605e5c] relative">
      <span>Page 1 of 1</span>
      <div className="absolute left-[1655px] top-0 h-full flex items-center">
        <span className="w-[7px] h-[2px] bg-[#484644]" />
        <div className="relative ml-[5px] w-[125px] h-[1px] bg-[#605e5c]">
          <div className="absolute left-[47px] -top-[6px] w-[5px] h-[13px] bg-[#605e5c]" />
          <div className="absolute left-[62px] -top-[3px] w-[1px] h-[7px] bg-[#605e5c]" />
        </div>
        <svg className="ml-[6px]" width="10" height="10" viewBox="0 0 10 10" stroke="#484644" strokeWidth="1.600"><path d="M5 0v10M0 5h10" /></svg>
        <span className="ml-[17px]">83%</span>
        <svg className="ml-[20px]" width="20" height="16" viewBox="0 0 20 16" fill="none" stroke="#605e5c" strokeWidth="1.300"><rect x="1" y="1" width="18" height="14" /><path d="M5 7V4h3M12 4h3v3M15 9v3h-3M8 12H5V9" /></svg>
      </div>
    </div>
  );
}

export default function App() {
  return (
    <div className="w-[1920px] h-[992px] overflow-hidden flex flex-col bg-[#f3f2f1] font-['Open_Sans',sans-serif]">
      <div className="h-[4px] shrink-0 bg-[#3b3a39]" />
      <Tabs />
      <Ribbon />
      <div className="flex h-[800px] shrink-0 shadow-[inset_0_2px_3px_rgba(0,0,0,0.12)]">
        <RailIcons />
        <div className="w-[1416px] shrink-0 flex flex-col">
          <div className="flex h-[756px]">
            <Canvas />
            <FiltersPane />
          </div>
          <TabBar />
        </div>
        <VizPane />
        <DataPane />
      </div>
      <StatusBar />
      <div className="flex-1 bg-[#1b1a19]" />
    </div>
  );
}
